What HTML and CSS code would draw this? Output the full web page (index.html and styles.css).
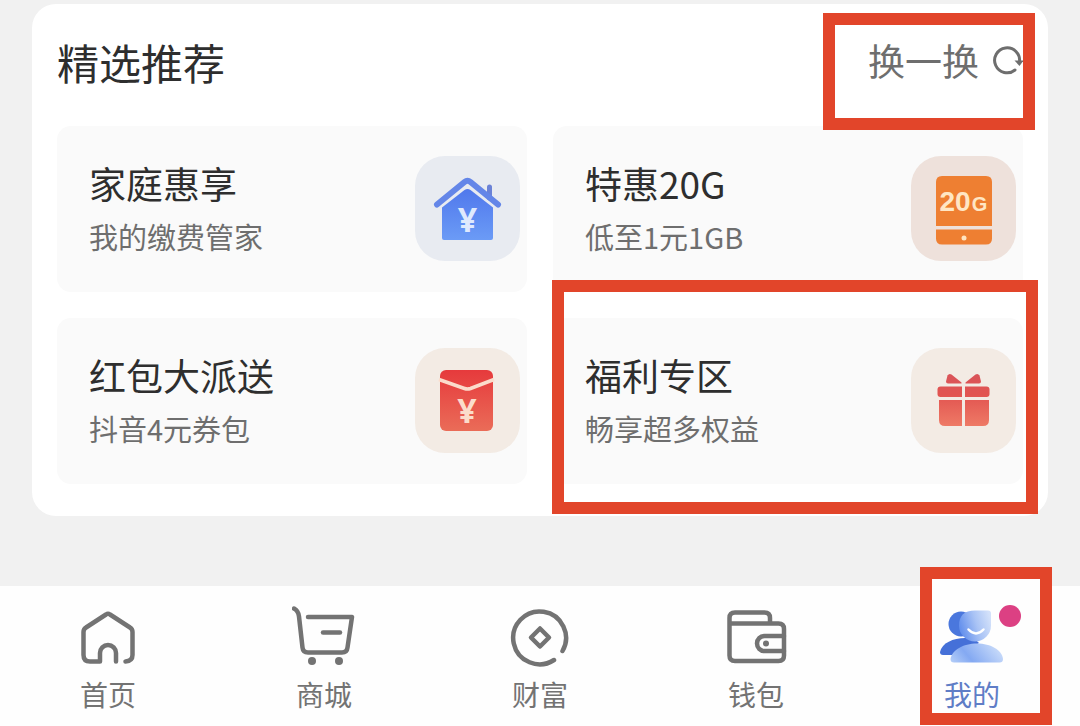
FILE: index.html
```html
<!DOCTYPE html>
<html lang="zh-CN">
<head>
  <meta charset="UTF-8">
  <meta name="viewport" content="width=device-width, initial-scale=1">
  <title>我的</title>
  <link rel="stylesheet" href="styles.css">
</head>
<body>
  <main class="panel">
    <div class="panel-header">
      <h1 class="panel-title">精选推荐</h1>
      <button type="button" class="refresh">
        换一换
        <svg class="refresh-icon" viewBox="-1 0 32 32" aria-hidden="true">
          <path d="M23 26A12.500 12.500 0 1 1 27.500 18" fill="none" stroke="#6e6e6e" stroke-width="3" stroke-linecap="round"/>
          <path d="M22.500 16.500h9l-4 5.500z" fill="#6e6e6e"/>
        </svg>
        <span class="mark mark-refresh"></span>
      </button>
    </div>

    <div class="tiles">
      <a class="tile" href="#">
        <span class="tile-text">
          <span class="tile-title">家庭惠享</span>
          <span class="tile-sub">我的缴费管家</span>
        </span>
        <svg class="tile-icon blue" viewBox="0 0 105 105" aria-hidden="true">
          <defs>
            <linearGradient id="houseFill" x1="0" y1="0" x2="0" y2="1">
              <stop offset="0" stop-color="#5078ec"/>
              <stop offset="1" stop-color="#6b9bf6"/>
            </linearGradient>
          </defs>
          <path d="M74.500 31v11" stroke="#6b82d6" stroke-width="5" stroke-linecap="round"/>
          <path d="M22 48.500L49.500 26q3-2.500 6 0L83 48.500" fill="none" stroke="#6486e8" stroke-width="6" stroke-linecap="round"/>
          <path d="M27 51.500L49.500 34q3-2 6 0L78 51.500V82q0 2-2 2H29q-2 0-2-2z" fill="url(#houseFill)"/>
          <text class="yen" x="52.500" y="76" fill="#dfeafd">¥</text>
        </svg>
      </a>

      <a class="tile" href="#">
        <span class="tile-text">
          <span class="tile-title">特惠20G</span>
          <span class="tile-sub">低至1元1GB</span>
        </span>
        <svg class="tile-icon orange" viewBox="0 0 105 105" aria-hidden="true">
          <path d="M25 70V26q0-6 6-6h44q6 0 6 6v44z" fill="#ee7f32"/>
          <path d="M25 73.500h56v9q0 6-6 6H31q-6 0-6-6z" fill="#ee7f32"/>
          <circle cx="53" cy="82" r="2.500" fill="#ffe3c0"/>
          <text class="data" x="28.500" y="55" fill="#ffe6c4">20<tspan class="data-unit" dx="1">G</tspan></text>
        </svg>
      </a>

      <a class="tile" href="#">
        <span class="tile-text">
          <span class="tile-title">红包大派送</span>
          <span class="tile-sub">抖音4元券包</span>
        </span>
        <svg class="tile-icon cream" viewBox="0 0 105 105" aria-hidden="true">
          <defs>
            <linearGradient id="packetFill" x1="0" y1="0" x2="0" y2="1">
              <stop offset="0" stop-color="#e63a3c"/>
              <stop offset="1" stop-color="#ea6c58"/>
            </linearGradient>
          </defs>
          <rect x="25" y="22" width="53" height="61" rx="6" fill="url(#packetFill)"/>
          <path d="M24 31.500L49.500 40.500q3 1 6 0L79 31.500" fill="none" stroke="#fbdccb" stroke-width="3.500"/>
          <text class="yen" x="52" y="75" fill="#fbdccb">¥</text>
        </svg>
      </a>

      <a class="tile" href="#">
        <span class="tile-text">
          <span class="tile-title">福利专区</span>
          <span class="tile-sub">畅享超多权益</span>
        </span>
        <svg class="tile-icon cream" viewBox="0 0 105 105" aria-hidden="true">
          <defs>
            <linearGradient id="giftFill" gradientUnits="userSpaceOnUse" x1="0" y1="26" x2="0" y2="78">
              <stop offset="0" stop-color="#d9545a"/>
              <stop offset="0.400" stop-color="#e25450"/>
              <stop offset="1" stop-color="#ee7a66"/>
            </linearGradient>
          </defs>
          <g fill="url(#giftFill)">
            <path d="M36.500 27.500q1.500-2.500 4-1L50.500 34.500V35.500H37q-2 0-2-2z"/>
            <path d="M68.500 27.500q-1.500-2.500-4-1L54.500 34.500V35.500H68q2 0 2-2z"/>
            <path d="M51 38.500V49H29.500q-3 0-3-3v-4.500q0-3 3-3z"/>
            <path d="M54 38.500V49h21.500q3 0 3-3v-4.500q0-3-3-3z"/>
            <path d="M28 52h23v26H34q-6 0-6-6z"/>
            <path d="M54 52h24v20q0 6-6 6H54z"/>
          </g>
        </svg>
        <span class="mark mark-tile"></span>
      </a>
    </div>
  </main>

  <nav class="tabbar">
    <a class="tab" href="#">
      <svg class="tab-icon" viewBox="0 0 64 64" aria-hidden="true">
        <path d="M40 57.500V49a8 8 0 0 0-16 0v8.500H14q-6.500 0-6.500-6.500V28q0-3 2.500-4.500L30 10.500q2-1.500 4 0L54 23.500q2.500 1.500 2.500 4.500v23q0 6-7 6.500"/>
      </svg>
      <span class="tab-label">首页</span>
    </a>
    <a class="tab" href="#">
      <svg class="tab-icon" viewBox="0 0 64 64" aria-hidden="true">
        <path d="M2 4.500q4.500 2.500 5 8l3.500 31q.5 5 5.500 5h34q5 0 5.500-5L60 13H16"/>
        <path d="M31 28.500h17"/>
        <circle class="solid" cx="20" cy="57" r="4"/>
        <circle class="solid" cx="47" cy="57" r="4"/>
      </svg>
      <span class="tab-label">商城</span>
    </a>
    <a class="tab" href="#">
      <svg class="tab-icon" viewBox="0 0 64 64" aria-hidden="true">
        <path d="M46 56A26.400 26.400 0 1 1 54.500 47"/>
        <path d="M32 24.500l9 9-9 9-9-9z"/>
      </svg>
      <span class="tab-label">财富</span>
    </a>
    <a class="tab" href="#">
      <svg class="tab-icon" viewBox="0 0 64 64" aria-hidden="true">
        <path d="M46 19.500V14q0-5.500-5.500-5.500H11q-5.500 0-5.500 5.500v37.500q0 5.500 5.500 5.500h43.500q5.500 0 5.500-5.500V25q0-5.500-5.500-5.500H6"/>
        <path d="M60 32H40.500a7.500 7.500 0 0 0 0 15H60"/>
        <circle class="solid" cx="42" cy="39.500" r="3"/>
      </svg>
      <span class="tab-label">钱包</span>
    </a>
    <a class="tab active" href="#">
      <span class="mark mark-tab"></span>
      <span class="avatar">
        <svg class="avatar-icon" viewBox="0 0 64 64" aria-hidden="true">
          <defs>
            <linearGradient id="headFill" x1="0" y1="0.600" x2="1" y2="0.300">
              <stop offset="0" stop-color="#5f8cec"/>
              <stop offset="0.550" stop-color="#a9c3f5"/>
              <stop offset="1" stop-color="#d3e1fa"/>
            </linearGradient>
            <linearGradient id="bodyFill" x1="0" y1="1" x2="1" y2="0.700">
              <stop offset="0" stop-color="#b6cff8"/>
              <stop offset="0.400" stop-color="#84a9f2"/>
              <stop offset="1" stop-color="#c3d7f9"/>
            </linearGradient>
          </defs>
          <circle cx="21" cy="20" r="12.500" fill="#4a77dd"/>
          <path d="M0 48C2 39 13 34 25 34q10 0 14 5L20 51H3q-3 0-3-3z" fill="#4570d8"/>
          <path d="M10.500 55C12 46 23 39.500 37 39.500S62 46 63 55q0 3.500-3.500 3.500H14q-3.500 0-3.500-3.500z" fill="url(#bodyFill)"/>
          <path d="M35 6.500h13q3 0 3 3V21.500A16 16 0 0 1 19 21.500Q19 6.500 35 6.500z" fill="url(#headFill)"/>
          <path d="M28.500 25.500q7.500 8 15 0" fill="none" stroke="#fff" stroke-width="2.500" stroke-linecap="round"/>
        </svg>
        <span class="badge"></span>
      </span>
      <span class="tab-label">我的</span>
    </a>
  </nav>
</body>
</html>
```

FILE: styles.css
```css
* {
  box-sizing: border-box;
}

body {
  margin: 0;
  min-height: 100vh;
  display: flex;
  flex-direction: column;
  background: #f1f1f1;
  font-family: "Noto Sans CJK SC", sans-serif;
  color: #2e2e2e;
}

a {
  color: inherit;
  text-decoration: none;
}

.panel {
  margin: 4px 32px 24px;
  padding: 0 25px 32px;
  background: #fff;
  border-radius: 24px;
}

.panel-header {
  display: flex;
  justify-content: space-between;
  align-items: flex-start;
  padding: 30px 0 36px;
}

.panel-title {
  margin: 0;
  font-size: 42px;
  font-weight: 400;
  line-height: 56px;
}

.refresh {
  position: relative;
  display: flex;
  align-items: center;
  gap: 12px;
  padding: 0;
  border: none;
  background: none;
  font-family: inherit;
  font-size: 37px;
  line-height: 52px;
  color: #6e6e6e;
  cursor: pointer;
}

.refresh-icon {
  width: 32px;
  height: 32px;
}

.tiles {
  display: grid;
  grid-template-columns: 1fr 1fr;
  gap: 26px;
}

.tile {
  position: relative;
  display: flex;
  justify-content: space-between;
  align-items: center;
  padding: 29px 7px 31px 32px;
  background: #fafafa;
  border-radius: 14px;
}

.tile-text {
  display: flex;
  flex-direction: column;
}

.tile-title {
  font-size: 37px;
  line-height: 56px;
}

.tile-sub {
  font-size: 29px;
  line-height: 50px;
  color: #6e6e6e;
}

.tile-icon {
  width: 105px;
  height: 105px;
  border-radius: 30px;
}

.blue {
  background: #e8ebf1;
}

.orange {
  background: #eee1db;
}

.cream {
  background: #f3ebe4;
}

.yen {
  font-family: "Noto Sans", sans-serif;
  font-size: 34px;
  font-weight: 700;
  text-anchor: middle;
}

.data {
  font-family: "Liberation Sans", sans-serif;
  font-size: 28px;
  font-weight: 700;
}

.data-unit {
  font-size: 20px;
}

.tabbar {
  display: grid;
  grid-template-columns: repeat(5, 1fr);
  margin-top: auto;
  background: #fefefe;
}

.tab {
  position: relative;
  display: flex;
  flex-direction: column;
  align-items: center;
  gap: 6px;
  padding: 18px 0 12px;
  color: #737373;
}

.tab-icon,
.avatar-icon {
  display: block;
  width: 64px;
  height: 64px;
}

.tab-icon {
  fill: none;
  stroke: #737373;
  stroke-width: 4.5;
  stroke-linecap: round;
  stroke-linejoin: round;
}

.tab-icon .solid {
  fill: #737373;
  stroke: none;
}

.tab-label {
  font-size: 28px;
  line-height: 40px;
}

.active .avatar,
.active .tab-label {
  position: relative;
  z-index: 2;
}

.active .tab-label {
  color: #5f7dc6;
}

.badge {
  position: absolute;
  top: 1px;
  right: -17px;
  width: 22px;
  height: 22px;
  border-radius: 50%;
  background: #dc4083;
}

/* red marker frames */
.mark {
  position: absolute;
  z-index: 1;
  border: 12px solid #e2452a;
  pointer-events: none;
}

.mark-refresh {
  top: -21px;
  right: -12px;
  bottom: -44px;
  left: -45px;
}

.mark-tile {
  top: -38px;
  right: -15px;
  bottom: -30px;
  left: -1px;
}

.mark-tab {
  top: -19px;
  right: 28px;
  bottom: 1px;
  left: 56px;
  background: #fefefe;
}
```
